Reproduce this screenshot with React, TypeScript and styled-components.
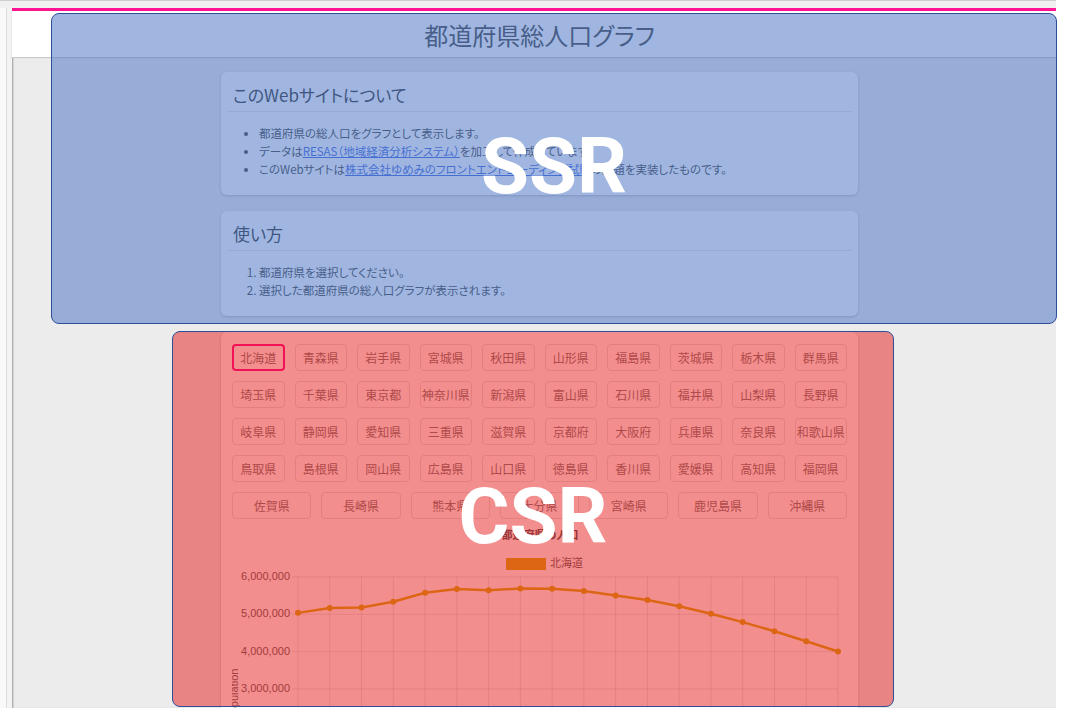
import React from 'react';
import styled, { createGlobalStyle } from 'styled-components';

const GlobalStyle = createGlobalStyle`
  html, body {
    margin: 0;
    padding: 0;
    overflow: hidden;
    background: #fff;
  }
  body {
    font-family: "Noto Sans CJK JP", "Noto Sans", sans-serif;
    color: #333;
  }
`;

const Screen = styled.div`
  position: relative;
  width: 1079px;
  height: 708px;
  overflow: hidden;
  display: flex;
  flex-direction: column;
`;

const TopStrip = styled.div`
  width: 1056px;
  height: 7px;
  flex-shrink: 0;
  background: #f0f0f0;
  border-top: 1px solid #cfcfcf;
`;

const Body = styled.div`
  display: flex;
  flex: 1;
  min-height: 0;
`;

const Gutter = styled.div`
  width: 12px;
  flex-shrink: 0;
  background: linear-gradient(to right, #f9f9f9 0 6px, #dedede 6px 7px, #f3f3f3 7px 12px);
`;

const Page = styled.div`
  width: 1044px;
  flex-shrink: 0;
  display: flex;
  flex-direction: column;
`;

const Filler = styled.div`
  flex: 1;
  background: #fff;
`;

const AccentBar = styled.div`
  height: 3px;
  flex-shrink: 0;
  background: #ff1493;
`;

const Header = styled.header`
  height: 46px;
  flex-shrink: 0;
  padding-left: 11px;
  display: flex;
  align-items: center;
  justify-content: center;
  background: #fff;
  border-bottom: 1px solid #c8c8c8;
  box-shadow: 0 1px 2px rgba(0, 0, 0, 0.12);
`;

const Title = styled.h1`
  margin: 0;
  font-size: 24px;
  font-weight: 400;
  color: #444;
  font-feature-settings: "palt";
`;

const Main = styled.main`
  flex: 1;
  min-height: 0;
  display: flex;
  flex-direction: column;
  align-items: center;
  gap: 16px;
  padding: 14px 0 0 11px;
  background: #ececec;
  box-shadow: inset 2px 0 2px -1px rgba(0, 0, 0, 0.35);
`;

const Card = styled.section`
  width: 637px;
  flex-shrink: 0;
  box-sizing: border-box;
  padding: 0 6px;
  background: #fff;
  border-radius: 6px;
  box-shadow: 0 1px 3px rgba(0, 0, 0, 0.22);
`;

const CardTitle = styled.h2`
  margin: 0;
  padding: 12px 6px 5px;
  font-size: 17px;
  line-height: 22px;
  font-weight: 400;
  color: #333;
  border-bottom: 1px solid #e5e5e5;
  font-feature-settings: "palt";
`;

const InfoList = styled.ul`
  margin: 0;
  padding: 12px 0 17px 32px;
  font-size: 11.5px;
  line-height: 18px;
  color: #444;
  font-feature-settings: "palt";
`;

const StepList = styled(InfoList).attrs({ as: 'ol' })``;

const TextLink = styled.a`
  color: #3f6ae0;
  text-decoration: underline;
`;

const PrefPanel = styled.div`
  padding: 12px 5px 0;
`;

const PrefGrid = styled.div`
  display: flex;
  flex-wrap: wrap;
  gap: 10px;
`;

const PrefButton = styled.button<{ $selected?: boolean }>`
  flex: 1 0 50px;
  height: 27px;
  box-sizing: border-box;
  padding: 0;
  background: #fff;
  border: ${p => (p.$selected ? '2px solid #ff1493' : '1px solid #e2e2e2')};
  border-radius: 4px;
  font-family: "Noto Sans CJK JP", sans-serif;
  font-size: 12px;
  color: #808080;
  cursor: pointer;
`;

const ChartBox = styled.div`
  margin-top: 7px;
  height: 200px;
`;

const Overlay = styled.div<{ $tone: 'ssr' | 'csr'; $x: number; $y: number; $w: number; $h: number }>`
  position: absolute;
  z-index: 5;
  left: ${p => p.$x}px;
  top: ${p => p.$y}px;
  width: ${p => p.$w}px;
  height: ${p => p.$h}px;
  box-sizing: border-box;
  display: flex;
  align-items: center;
  justify-content: center;
  padding-bottom: 4px;
  border: 1.5px solid #2c4f98;
  border-radius: 8px;
  background: ${p => (p.$tone === 'ssr' ? 'rgba(76, 117, 196, 0.53)' : 'rgba(228, 15, 15, 0.47)')};
  font-family: Roboto, "Liberation Sans", sans-serif;
  font-weight: 700;
  font-size: 78px;
  line-height: 1;
  color: #fff;
`;

const prefectures = [
  '北海道', '青森県', '岩手県', '宮城県', '秋田県', '山形県', '福島県', '茨城県', '栃木県', '群馬県',
  '埼玉県', '千葉県', '東京都', '神奈川県', '新潟県', '富山県', '石川県', '福井県', '山梨県', '長野県',
  '岐阜県', '静岡県', '愛知県', '三重県', '滋賀県', '京都府', '大阪府', '兵庫県', '奈良県', '和歌山県',
  '鳥取県', '島根県', '岡山県', '広島県', '山口県', '徳島県', '香川県', '愛媛県', '高知県', '福岡県',
  '佐賀県', '長崎県', '熊本県', '大分県', '宮崎県', '鹿児島県', '沖縄県',
];

const hokkaido = [
  5039206, 5171800, 5184287, 5338206, 5575989, 5679439, 5643647, 5692321, 5683062,
  5627737, 5506419, 5381733, 5216615, 5016554, 4791592, 4546357, 4280427, 4004973,
];

const LINE = '#d6b41a';

const PopulationChart: React.FC = () => {
  const left = 66;
  const right = 606;
  const top = 51;
  const perMillion = 37.33;
  const step = (right - left) / (hokkaido.length - 1);
  const toY = (v: number) => top + (6 - v / 1e6) * perMillion;
  const pts = hokkaido.map((v, i) => [left + i * step, toY(v)]);

  return (
    <svg width="616" height="200" viewBox="0 0 616 200">
      <text x="308" y="10" textAnchor="middle" dominantBaseline="middle" fontSize="11" fontWeight="700"
        fill="#555" fontFamily='"Noto Sans CJK JP", sans-serif'>都道府県の人口</text>
      <rect x="274" y="32" width="40" height="12" fill={LINE} />
      <text x="318" y="38" dominantBaseline="middle" fontSize="11" fill="#666"
        fontFamily='"Noto Sans CJK JP", sans-serif'>北海道</text>

      {[6, 5, 4, 3, 2].map(m => (
        <g key={m}>
          <line x1={left - 6} x2={right} y1={toY(m * 1e6)} y2={toY(m * 1e6)} stroke="rgba(0,0,0,0.1)" />
          <text x={left - 8} y={toY(m * 1e6)} textAnchor="end" dominantBaseline="middle" fontSize="11"
            fill="#666" fontFamily='"Liberation Sans", sans-serif'>
            {`${m},000,000`}
          </text>
        </g>
      ))}
      {hokkaido.map((_, i) => (
        <line key={i} x1={left + i * step} x2={left + i * step} y1={top} y2={200} stroke="rgba(0,0,0,0.1)" />
      ))}
      <text transform="translate(3 168) rotate(-90)" textAnchor="middle" dominantBaseline="middle" fontSize="11"
        fill="#666" fontFamily='"Liberation Sans", sans-serif'>population</text>

      <polyline points={pts.map(p => p.join(',')).join(' ')} fill="none" stroke={LINE} strokeWidth="2.5" />
      {pts.map(([x, y], i) => (
        <circle key={i} cx={x} cy={y} r="3" fill={LINE} />
      ))}
    </svg>
  );
};

const App: React.FC = () => {
  return (
    <Screen>
      <GlobalStyle />
      <TopStrip />
      <Body>
        <Gutter />
        <Page>
          <AccentBar />
          <Header>
            <Title>都道府県総人口グラフ</Title>
          </Header>
          <Main>
            <Card>
              <CardTitle>このWebサイトについて</CardTitle>
              <InfoList>
                <li>都道府県の総人口をグラフとして表示します。</li>
                <li>
                  データは<TextLink href="#">RESAS（地域経済分析システム）</TextLink>を加工して作成しています。
                </li>
                <li>
                  このWebサイトは<TextLink href="#">株式会社ゆめみのフロントエンドコーディング試験</TextLink>の課題を実装したものです。
                </li>
              </InfoList>
            </Card>

            <Card>
              <CardTitle>使い方</CardTitle>
              <StepList>
                <li>都道府県を選択してください。</li>
                <li>選択した都道府県の総人口グラフが表示されます。</li>
              </StepList>
            </Card>

            <Card>
              <PrefPanel>
                <PrefGrid>
                  {prefectures.map((name, i) => (
                    <PrefButton key={name} $selected={i === 0}>{name}</PrefButton>
                  ))}
                </PrefGrid>
                <ChartBox>
                  <PopulationChart />
                </ChartBox>
              </PrefPanel>
            </Card>
          </Main>
        </Page>
        <Filler />
      </Body>

      <Overlay $tone="ssr" $x={51} $y={13} $w={1006} $h={311}>SSR</Overlay>
      <Overlay $tone="csr" $x={172} $y={331} $w={722} $h={376}>CSR</Overlay>
    </Screen>
  );
};

export default App;
